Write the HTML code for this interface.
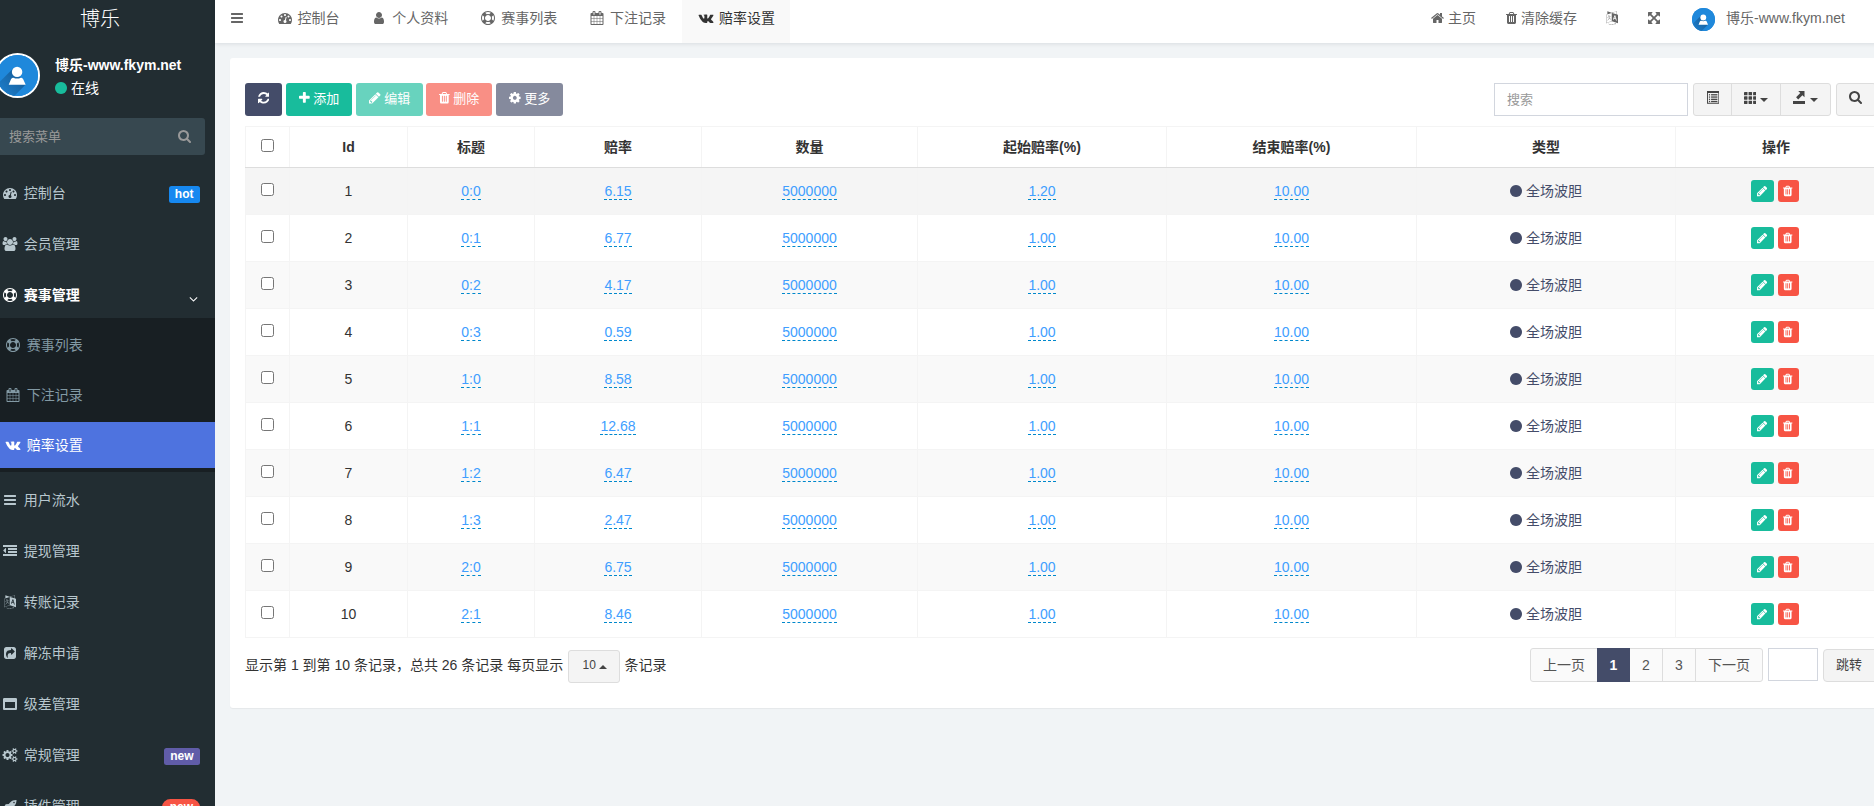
<!DOCTYPE html>
<html lang="zh-CN"><head><meta charset="utf-8"><title>博乐</title>
<style>
*{box-sizing:border-box}
html,body{margin:0;padding:0}
body{width:1874px;height:806px;overflow:hidden;position:relative;background:#f1f4f6;font-family:"Liberation Sans","Noto Sans CJK SC",sans-serif;font-size:14px;line-height:20px;color:#333}
a{text-decoration:none;color:inherit}
ul{list-style:none;margin:0;padding:0}
/* sidebar */
#side{position:absolute;left:-15px;top:-7px;width:230px;height:900px;background:#222d32;color:#b8c7ce}
#logo{height:50px;line-height:52px;text-align:center;font-size:20px;font-weight:300;color:#fff}
#upanel{position:relative;height:65px}
#upanel .av{position:absolute;left:10px;top:10px;width:45px;height:45px;border-radius:50%;background:#1f88db;border:2px solid #fff;overflow:hidden}
#upanel .nm{position:absolute;left:70px;top:12px;font-weight:bold;color:#fff;font-size:14px;white-space:nowrap}
#upanel .ol{position:absolute;left:70px;top:35px;color:#fff;font-size:14px;white-space:nowrap}
#sform{margin:10px 10px 0;height:37px;background:#374850;border-radius:3px;position:relative;font-size:13px;color:#999;line-height:37px;padding-left:14px}
#sform svg{position:absolute;right:14px;top:10.5px}
#menu{padding-top:10px}
#menu>li{margin-top:5px}
#menu li>a{display:block;height:46px;line-height:46px;padding-left:16.2px;position:relative;white-space:nowrap}
#menu li>a .t{margin-left:.8px}
#menu .sub{background:#181f23;padding:0 0 4px;color:#8299a4}
#menu .sub li{padding-top:4px}
#menu .sub li>a{padding-left:19.2px}
#menu .sub li>a .t{margin-left:.6px}
#menu .sub li.act>a{background:#4e73df;color:#fff}
#menu .open>a{color:#fff;font-weight:bold}
.bdg{position:absolute;right:15px;top:16px;height:17px;line-height:17px;font-size:12px;font-weight:bold;color:#fff;border-radius:2.5px;padding:0 6.5px 0 5.5px}
/* header */
#hdr{position:absolute;left:215px;top:-7px;width:1700px;height:50px;background:#fff;box-shadow:0 1px 4px rgba(0,21,41,.10);color:#666}
#hdr .tg{position:absolute;left:0;top:0;width:44px;height:50px;line-height:50px;text-align:center}
#tabs{position:absolute;left:45px;top:0;height:50px;white-space:nowrap;font-size:0}
#tabs a{display:inline-block;height:50px;line-height:50px;padding:0 15.5px;font-size:14px;vertical-align:top}
#tabs a.act{background:#f9f9f9;color:#333}
#rnav{position:absolute;left:0;top:0;height:50px;line-height:50px}
#rnav>*{position:absolute;top:0;white-space:nowrap}
/* panel */
#panel{position:absolute;left:230px;top:58px;width:1700px;height:650px;background:#fff;border-radius:3px;box-shadow:0 1px 1px rgba(0,0,0,.05)}
.btn{position:absolute;top:25px;height:33px;line-height:31px;border-radius:3px;color:#fff;text-align:center;font-size:13px;white-space:nowrap}
.gbtn{position:absolute;background:#f4f4f4;border:1px solid #ddd;color:#444;text-align:center}
/* table */
#tbl{position:absolute;left:15px;top:68px;border-collapse:collapse;table-layout:fixed;width:1631px}
#tbl th,#tbl td{border:1px solid #f4f4f4;text-align:center;padding:0;vertical-align:middle}
#tbl th{height:41px;font-weight:bold;border-bottom:1px solid #ddd;color:#333}
#tbl td{height:47px}
#tbl tbody tr:nth-child(odd){background:#f9f9f9}
#tbl tbody tr.hov{background:#f5f5f5}
.cb{display:inline-block;width:13px;height:13px;border:1px solid #767676;border-radius:2.5px;background:#fff;vertical-align:middle;position:relative;top:-3px}
a.ed{color:#409eff;border-bottom:1px dashed #08c}
.ty{color:#444c69}
.bx{position:relative;left:-1px;display:inline-block;height:22px;line-height:20px;padding:0;text-align:center;border-radius:3px;border:1px solid transparent;font-size:12px;vertical-align:middle}
.bx-e{background:#18bc9c;width:23px;margin-right:4px;margin-left:-1px}
.bx-d{background:#f75444;width:21px}
/* footer pagination */
#pinfo{position:absolute;left:15px;top:597px;white-space:nowrap;color:#333}
#pinfo2{position:absolute;left:394.5px;top:597px;white-space:nowrap;color:#333}
.pg{position:absolute;top:590px;height:34px;line-height:32px;border:1px solid #ddd;background:#fafafa;color:#555;text-align:center}

</style></head>
<body>
<div id="side">
 <div id="logo">博乐</div>
 <div id="upanel">
  <div class="av"><svg width="41" height="41" viewBox="0 0 41 41"><defs><linearGradient id="sh1" x1="1" y1="0" x2="0" y2="1"><stop offset="0.25" stop-color="#14568f" stop-opacity=".7"/><stop offset="0.8" stop-color="#14568f" stop-opacity="0"/></linearGradient></defs><rect width="41" height="41" fill="#1f88db"/><polygon points="16.4,13.2 28.7,29.6 3.7,54.6 -8.6,38.2" fill="url(#sh1)"/><circle cx="20.1" cy="16.9" r="5.2" fill="#fff"/><path d="M11.7 29.8 L14 24.2 Q14.8 22.3 16.4 22.7 Q20.1 24.4 23.8 22.7 Q25.4 22.3 26.2 24.2 L28.7 29.8 Z" fill="#fff"/></svg></div>
  <div class="nm">博乐-www.fkym.net</div>
  <div class="ol"><svg style="display:inline-block;width:12.00px;height:14.0px;vertical-align:-2.00px;" viewBox="-0 0 1536 1792" fill="#18bc9c"><path transform="translate(0,1536) scale(1,-1)" d="M1536 640q0 -209 -103 -385.5t-279.5 -279.5t-385.5 -103t-385.5 103t-279.5 279.5t-103 385.5t103 385.5t279.5 279.5t385.5 103t385.5 -103t279.5 -279.5t103 -385.5z"/></svg> 在线</div>
 </div>
 <div id="sform">搜索菜单<svg style="display:inline-block;width:13.00px;height:14.0px;vertical-align:-2.00px;" viewBox="-0 0 1664 1792" fill="#999"><path transform="translate(0,1536) scale(1,-1)" d="M1152 704q0 185 -131.5 316.5t-316.5 131.5t-316.5 -131.5t-131.5 -316.5t131.5 -316.5t316.5 -131.5t316.5 131.5t131.5 316.5zM1664 -128q0 -52 -38 -90t-90 -38q-54 0 -90 38l-343 342q-179 -124 -399 -124q-143 0 -273.5 55.5t-225 150t-150 225t-55.5 273.5 t55.5 273.5t150 225t225 150t273.5 55.5t273.5 -55.5t225 -150t150 -225t55.5 -273.5q0 -220 -124 -399l343 -343q37 -37 37 -90z"/></svg></div>
 <ul id="menu">
  <li><a><svg style="display:inline-block;width:18.00px;height:14px;vertical-align:-2.00px;" viewBox="-256 0 2304 1792" fill="currentColor"><path transform="translate(0,1536) scale(1,-1)" d="M384 384q0 53 -37.5 90.5t-90.5 37.5t-90.5 -37.5t-37.5 -90.5t37.5 -90.5t90.5 -37.5t90.5 37.5t37.5 90.5zM576 832q0 53 -37.5 90.5t-90.5 37.5t-90.5 -37.5t-37.5 -90.5t37.5 -90.5t90.5 -37.5t90.5 37.5t37.5 90.5zM1004 351l101 382q6 26 -7.5 48.5t-38.5 29.5 t-48 -6.5t-30 -39.5l-101 -382q-60 -5 -107 -43.5t-63 -98.5q-20 -77 20 -146t117 -89t146 20t89 117q16 60 -6 117t-72 91zM1664 384q0 53 -37.5 90.5t-90.5 37.5t-90.5 -37.5t-37.5 -90.5t37.5 -90.5t90.5 -37.5t90.5 37.5t37.5 90.5zM1024 1024q0 53 -37.5 90.5 t-90.5 37.5t-90.5 -37.5t-37.5 -90.5t37.5 -90.5t90.5 -37.5t90.5 37.5t37.5 90.5zM1472 832q0 53 -37.5 90.5t-90.5 37.5t-90.5 -37.5t-37.5 -90.5t37.5 -90.5t90.5 -37.5t90.5 37.5t37.5 90.5zM1792 384q0 -261 -141 -483q-19 -29 -54 -29h-1402q-35 0 -54 29 q-141 221 -141 483q0 182 71 348t191 286t286 191t348 71t348 -71t286 -191t191 -286t71 -348z"/></svg><span class="t"> 控制台</span><span class="bdg" style="background:#1688f0">hot</span></a></li>
  <li><a><svg style="display:inline-block;width:18.00px;height:14px;vertical-align:-2.00px;" viewBox="-192 0 2304 1792" fill="currentColor"><path transform="translate(0,1536) scale(1,-1)" d="M593 640q-162 -5 -265 -128h-134q-82 0 -138 40.5t-56 118.5q0 353 124 353q6 0 43.5 -21t97.5 -42.5t119 -21.5q67 0 133 23q-5 -37 -5 -66q0 -139 81 -256zM1664 3q0 -120 -73 -189.5t-194 -69.5h-874q-121 0 -194 69.5t-73 189.5q0 53 3.5 103.5t14 109t26.5 108.5 t43 97.5t62 81t85.5 53.5t111.5 20q10 0 43 -21.5t73 -48t107 -48t135 -21.5t135 21.5t107 48t73 48t43 21.5q61 0 111.5 -20t85.5 -53.5t62 -81t43 -97.5t26.5 -108.5t14 -109t3.5 -103.5zM640 1280q0 -106 -75 -181t-181 -75t-181 75t-75 181t75 181t181 75t181 -75 t75 -181zM1344 896q0 -159 -112.5 -271.5t-271.5 -112.5t-271.5 112.5t-112.5 271.5t112.5 271.5t271.5 112.5t271.5 -112.5t112.5 -271.5zM1920 671q0 -78 -56 -118.5t-138 -40.5h-134q-103 123 -265 128q81 117 81 256q0 29 -5 66q66 -23 133 -23q59 0 119 21.5t97.5 42.5 t43.5 21q124 0 124 -353zM1792 1280q0 -106 -75 -181t-181 -75t-181 75t-75 181t75 181t181 75t181 -75t75 -181z"/></svg><span class="t"> 会员管理</span></a></li>
  <li class="open"><a><svg style="display:inline-block;width:18.00px;height:14px;vertical-align:-2.00px;" viewBox="-256 0 2304 1792" fill="currentColor"><path transform="translate(0,1536) scale(1,-1)" d="M896 1536q182 0 348 -71t286 -191t191 -286t71 -348t-71 -348t-191 -286t-286 -191t-348 -71t-348 71t-286 191t-191 286t-71 348t71 348t191 286t286 191t348 71zM896 1408q-190 0 -361 -90l194 -194q82 28 167 28t167 -28l194 194q-171 90 -361 90zM218 279l194 194 q-28 82 -28 167t28 167l-194 194q-90 -171 -90 -361t90 -361zM896 -128q190 0 361 90l-194 194q-82 -28 -167 -28t-167 28l-194 -194q171 -90 361 -90zM896 256q159 0 271.5 112.5t112.5 271.5t-112.5 271.5t-271.5 112.5t-271.5 -112.5t-112.5 -271.5t112.5 -271.5 t271.5 -112.5zM1380 473l194 -194q90 171 90 361t-90 361l-194 -194q28 -82 28 -167t-28 -167z"/></svg><span class="t"> 赛事管理</span><span style="position:absolute;right:17px;top:3.5px;color:#fff"><svg style="display:inline-block;width:9.00px;height:14.0px;vertical-align:-2.00px;" viewBox="-0 0 1152 1792" fill="currentColor"><path transform="translate(0,1536) scale(1,-1)" d="M1075 800q0 -13 -10 -23l-466 -466q-10 -10 -23 -10t-23 10l-466 466q-10 10 -10 23t10 23l50 50q10 10 23 10t23 -10l393 -393l393 393q10 10 23 10t23 -10l50 -50q10 -10 10 -23z"/></svg></span></a>
   <ul class="sub">
    <li><a><svg style="display:inline-block;width:18.00px;height:14px;vertical-align:-2.00px;" viewBox="-256 0 2304 1792" fill="currentColor"><path transform="translate(0,1536) scale(1,-1)" d="M896 1536q182 0 348 -71t286 -191t191 -286t71 -348t-71 -348t-191 -286t-286 -191t-348 -71t-348 71t-286 191t-191 286t-71 348t71 348t191 286t286 191t348 71zM896 1408q-190 0 -361 -90l194 -194q82 28 167 28t167 -28l194 194q-171 90 -361 90zM218 279l194 194 q-28 82 -28 167t28 167l-194 194q-90 -171 -90 -361t90 -361zM896 -128q190 0 361 90l-194 194q-82 -28 -167 -28t-167 28l-194 -194q171 -90 361 -90zM896 256q159 0 271.5 112.5t112.5 271.5t-112.5 271.5t-271.5 112.5t-271.5 -112.5t-112.5 -271.5t112.5 -271.5 t271.5 -112.5zM1380 473l194 -194q90 171 90 361t-90 361l-194 -194q28 -82 28 -167t-28 -167z"/></svg><span class="t"> 赛事列表</span></a></li>
    <li><a><svg style="display:inline-block;width:18.00px;height:14px;vertical-align:-2.00px;" viewBox="-320 0 2304 1792" fill="currentColor"><path transform="translate(0,1536) scale(1,-1)" d="M128 -128h288v288h-288v-288zM480 -128h320v288h-320v-288zM128 224h288v320h-288v-320zM480 224h320v320h-320v-320zM128 608h288v288h-288v-288zM864 -128h320v288h-320v-288zM480 608h320v288h-320v-288zM1248 -128h288v288h-288v-288zM864 224h320v320h-320v-320z M512 1088v288q0 13 -9.5 22.5t-22.5 9.5h-64q-13 0 -22.5 -9.5t-9.5 -22.5v-288q0 -13 9.5 -22.5t22.5 -9.5h64q13 0 22.5 9.5t9.5 22.5zM1248 224h288v320h-288v-320zM864 608h320v288h-320v-288zM1248 608h288v288h-288v-288zM1280 1088v288q0 13 -9.5 22.5t-22.5 9.5h-64 q-13 0 -22.5 -9.5t-9.5 -22.5v-288q0 -13 9.5 -22.5t22.5 -9.5h64q13 0 22.5 9.5t9.5 22.5zM1664 1152v-1280q0 -52 -38 -90t-90 -38h-1408q-52 0 -90 38t-38 90v1280q0 52 38 90t90 38h128v96q0 66 47 113t113 47h64q66 0 113 -47t47 -113v-96h384v96q0 66 47 113t113 47 h64q66 0 113 -47t47 -113v-96h128q52 0 90 -38t38 -90z"/></svg><span class="t"> 下注记录</span></a></li>
    <li class="act"><a><svg style="display:inline-block;width:18.00px;height:14px;vertical-align:-2.00px;" viewBox="-192 0 2304 1792" fill="currentColor"><path transform="translate(0,1536) scale(1,-1)" d="M1917 1016q23 -64 -150 -294q-24 -32 -65 -85q-40 -51 -55 -72t-30.5 -49.5t-12 -42t13 -34.5t32.5 -43t57 -53q4 -2 5 -4q141 -131 191 -221q3 -5 6.5 -12.5t7 -26.5t-0.5 -34t-25 -27.5t-59 -12.5l-256 -4q-24 -5 -56 5t-52 22l-20 12q-30 21 -70 64t-68.5 77.5t-61 58 t-56.5 15.5q-3 -1 -8 -3.5t-17 -14.5t-21.5 -29.5t-17 -52t-6.5 -77.5q0 -15 -3.5 -27.5t-7.5 -18.5l-4 -5q-18 -19 -53 -22h-115q-71 -4 -146 16.5t-131.5 53t-103 66t-70.5 57.5l-25 24q-10 10 -27.5 30t-71.5 91t-106 151t-122.5 211t-130.5 272q-6 16 -6 27t3 16l4 6 q15 19 57 19l274 2q12 -2 23 -6.5t16 -8.5l5 -3q16 -11 24 -32q20 -50 46 -103.5t41 -81.5l16 -29q29 -60 56 -104t48.5 -68.5t41.5 -38.5t34 -14t27 5q2 1 5 5t12 22t13.5 47t9.5 81t0 125q-2 40 -9 73t-14 46l-6 12q-25 34 -85 43q-13 2 5 24q16 19 38 30q53 26 239 24 q82 -1 135 -13q20 -5 33.5 -13.5t20.5 -24t10.5 -32t3.5 -45.5t-1 -55t-2.5 -70.5t-1.5 -82.5q0 -11 -1 -42t-0.5 -48t3.5 -40.5t11.5 -39t22.5 -24.5q8 -2 17 -4t26 11t38 34.5t52 67t68 107.5q60 104 107 225q4 10 10 17.5t11 10.5l4 3l5 2.5t13 3t20 0.5l288 2 q39 5 64 -2.5t31 -16.5z"/></svg><span class="t"> 赔率设置</span></a></li>
   </ul>
  </li>
  <li><a><svg style="display:inline-block;width:18.00px;height:14px;vertical-align:-2.00px;" viewBox="-384 0 2304 1792" fill="currentColor"><path transform="translate(0,1536) scale(1,-1)" d="M1536 192v-128q0 -26 -19 -45t-45 -19h-1408q-26 0 -45 19t-19 45v128q0 26 19 45t45 19h1408q26 0 45 -19t19 -45zM1536 704v-128q0 -26 -19 -45t-45 -19h-1408q-26 0 -45 19t-19 45v128q0 26 19 45t45 19h1408q26 0 45 -19t19 -45zM1536 1216v-128q0 -26 -19 -45 t-45 -19h-1408q-26 0 -45 19t-19 45v128q0 26 19 45t45 19h1408q26 0 45 -19t19 -45z"/></svg><span class="t"> 用户流水</span></a></li>
  <li><a><svg style="display:inline-block;width:18.00px;height:14px;vertical-align:-2.00px;" viewBox="-256 0 2304 1792" fill="currentColor"><path transform="translate(0,1536) scale(1,-1)" d="M384 992v-576q0 -13 -9.5 -22.5t-22.5 -9.5q-14 0 -23 9l-288 288q-9 9 -9 23t9 23l288 288q9 9 23 9q13 0 22.5 -9.5t9.5 -22.5zM1792 224v-192q0 -13 -9.5 -22.5t-22.5 -9.5h-1728q-13 0 -22.5 9.5t-9.5 22.5v192q0 13 9.5 22.5t22.5 9.5h1728q13 0 22.5 -9.5 t9.5 -22.5zM1792 608v-192q0 -13 -9.5 -22.5t-22.5 -9.5h-1088q-13 0 -22.5 9.5t-9.5 22.5v192q0 13 9.5 22.5t22.5 9.5h1088q13 0 22.5 -9.5t9.5 -22.5zM1792 992v-192q0 -13 -9.5 -22.5t-22.5 -9.5h-1088q-13 0 -22.5 9.5t-9.5 22.5v192q0 13 9.5 22.5t22.5 9.5h1088 q13 0 22.5 -9.5t9.5 -22.5zM1792 1376v-192q0 -13 -9.5 -22.5t-22.5 -9.5h-1728q-13 0 -22.5 9.5t-9.5 22.5v192q0 13 9.5 22.5t22.5 9.5h1728q13 0 22.5 -9.5t9.5 -22.5z"/></svg><span class="t"> 提现管理</span></a></li>
  <li><a><svg style="display:inline-block;width:18.00px;height:14px;vertical-align:-2.00px;" viewBox="-384 0 2304 1792" fill="currentColor"><path transform="translate(0,1536) scale(1,-1)" d="M654 458q-1 -3 -12.5 0.5t-31.5 11.5l-20 9q-44 20 -87 49q-7 5 -41 31.5t-38 28.5q-67 -103 -134 -181q-81 -95 -105 -110q-4 -2 -19.5 -4t-18.5 0q6 4 82 92q21 24 85.5 115t78.5 118q17 30 51 98.5t36 77.5q-8 1 -110 -33q-8 -2 -27.5 -7.5t-34.5 -9.5t-17 -5 q-2 -2 -2 -10.5t-1 -9.5q-5 -10 -31 -15q-23 -7 -47 0q-18 4 -28 21q-4 6 -5 23q6 2 24.5 5t29.5 6q58 16 105 32q100 35 102 35q10 2 43 19.5t44 21.5q9 3 21.5 8t14.5 5.5t6 -0.5q2 -12 -1 -33q0 -2 -12.5 -27t-26.5 -53.5t-17 -33.5q-25 -50 -77 -131l64 -28 q12 -6 74.5 -32t67.5 -28q4 -1 10.5 -25.5t4.5 -30.5zM449 944q3 -15 -4 -28q-12 -23 -50 -38q-30 -12 -60 -12q-26 3 -49 26q-14 15 -18 41l1 3q3 -3 19.5 -5t26.5 0t58 16q36 12 55 14q17 0 21 -17zM1147 815l63 -227l-139 42zM39 15l694 232v1032l-694 -233v-1031z M1280 332l102 -31l-181 657l-100 31l-216 -536l102 -31l45 110l211 -65zM777 1294l573 -184v380zM1088 -29l158 -13l-54 -160l-40 66q-130 -83 -276 -108q-58 -12 -91 -12h-84q-79 0 -199.5 39t-183.5 85q-8 7 -8 16q0 8 5 13.5t13 5.5q4 0 18 -7.5t30.5 -16.5t20.5 -11 q73 -37 159.5 -61.5t157.5 -24.5q95 0 167 14.5t157 50.5q15 7 30.5 15.5t34 19t28.5 16.5zM1536 1050v-1079l-774 246q-14 -6 -375 -127.5t-368 -121.5q-13 0 -18 13q0 1 -1 3v1078q3 9 4 10q5 6 20 11q107 36 149 50v384l558 -198q2 0 160.5 55t316 108.5t161.5 53.5 q20 0 20 -21v-418z"/></svg><span class="t"> 转账记录</span></a></li>
  <li><a><svg style="display:inline-block;width:18.00px;height:14px;vertical-align:-2.00px;" viewBox="-384 0 2304 1792" fill="currentColor"><path transform="translate(0,1536) scale(1,-1)" d="M1005 435l352 352q19 19 19 45t-19 45l-352 352q-30 31 -69 14q-40 -17 -40 -59v-160q-119 0 -216 -19.5t-162.5 -51t-114 -79t-76.5 -95.5t-44.5 -109t-21.5 -111.5t-5 -110.5q0 -181 167 -404q11 -12 25 -12q7 0 13 3q22 9 19 33q-44 354 62 473q46 52 130 75.5 t224 23.5v-160q0 -42 40 -59q12 -5 24 -5q26 0 45 19zM1536 1120v-960q0 -119 -84.5 -203.5t-203.5 -84.5h-960q-119 0 -203.5 84.5t-84.5 203.5v960q0 119 84.5 203.5t203.5 84.5h960q119 0 203.5 -84.5t84.5 -203.5z"/></svg><span class="t"> 解冻申请</span></a></li>
  <li><a><svg style="display:inline-block;width:18.00px;height:14px;vertical-align:-2.00px;" viewBox="-256 0 2304 1792" fill="currentColor"><path transform="translate(0,1536) scale(1,-1)" d="M256 128h1280v768h-1280v-768zM1792 1248v-1216q0 -66 -47 -113t-113 -47h-1472q-66 0 -113 47t-47 113v1216q0 66 47 113t113 47h1472q66 0 113 -47t47 -113z"/></svg><span class="t"> 级差管理</span></a></li>
  <li><a><svg style="display:inline-block;width:18.00px;height:14px;vertical-align:-2.00px;" viewBox="-192 0 2304 1792" fill="currentColor"><path transform="translate(0,1536) scale(1,-1)" d="M896 640q0 106 -75 181t-181 75t-181 -75t-75 -181t75 -181t181 -75t181 75t75 181zM1664 128q0 52 -38 90t-90 38t-90 -38t-38 -90q0 -53 37.5 -90.5t90.5 -37.5t90.5 37.5t37.5 90.5zM1664 1152q0 52 -38 90t-90 38t-90 -38t-38 -90q0 -53 37.5 -90.5t90.5 -37.5 t90.5 37.5t37.5 90.5zM1280 731v-185q0 -10 -7 -19.5t-16 -10.5l-155 -24q-11 -35 -32 -76q34 -48 90 -115q7 -11 7 -20q0 -12 -7 -19q-23 -30 -82.5 -89.5t-78.5 -59.5q-11 0 -21 7l-115 90q-37 -19 -77 -31q-11 -108 -23 -155q-7 -24 -30 -24h-186q-11 0 -20 7.5t-10 17.5 l-23 153q-34 10 -75 31l-118 -89q-7 -7 -20 -7q-11 0 -21 8q-144 133 -144 160q0 9 7 19q10 14 41 53t47 61q-23 44 -35 82l-152 24q-10 1 -17 9.5t-7 19.5v185q0 10 7 19.5t16 10.5l155 24q11 35 32 76q-34 48 -90 115q-7 11 -7 20q0 12 7 20q22 30 82 89t79 59q11 0 21 -7 l115 -90q34 18 77 32q11 108 23 154q7 24 30 24h186q11 0 20 -7.5t10 -17.5l23 -153q34 -10 75 -31l118 89q8 7 20 7q11 0 21 -8q144 -133 144 -160q0 -8 -7 -19q-12 -16 -42 -54t-45 -60q23 -48 34 -82l152 -23q10 -2 17 -10.5t7 -19.5zM1920 198v-140q0 -16 -149 -31 q-12 -27 -30 -52q51 -113 51 -138q0 -4 -4 -7q-122 -71 -124 -71q-8 0 -46 47t-52 68q-20 -2 -30 -2t-30 2q-14 -21 -52 -68t-46 -47q-2 0 -124 71q-4 3 -4 7q0 25 51 138q-18 25 -30 52q-149 15 -149 31v140q0 16 149 31q13 29 30 52q-51 113 -51 138q0 4 4 7q4 2 35 20 t59 34t30 16q8 0 46 -46.5t52 -67.5q20 2 30 2t30 -2q51 71 92 112l6 2q4 0 124 -70q4 -3 4 -7q0 -25 -51 -138q17 -23 30 -52q149 -15 149 -31zM1920 1222v-140q0 -16 -149 -31q-12 -27 -30 -52q51 -113 51 -138q0 -4 -4 -7q-122 -71 -124 -71q-8 0 -46 47t-52 68 q-20 -2 -30 -2t-30 2q-14 -21 -52 -68t-46 -47q-2 0 -124 71q-4 3 -4 7q0 25 51 138q-18 25 -30 52q-149 15 -149 31v140q0 16 149 31q13 29 30 52q-51 113 -51 138q0 4 4 7q4 2 35 20t59 34t30 16q8 0 46 -46.5t52 -67.5q20 2 30 2t30 -2q51 71 92 112l6 2q4 0 124 -70 q4 -3 4 -7q0 -25 -51 -138q17 -23 30 -52q149 -15 149 -31z"/></svg><span class="t"> 常规管理</span><span class="bdg" style="background:#605ca8;padding:0 6.5px">new</span></a></li>
  <li><a><svg style="display:inline-block;width:18.00px;height:14px;vertical-align:-2.00px;" viewBox="-320 0 2304 1792" fill="currentColor"><path transform="translate(0,1536) scale(1,-1)" d="M1440 1088q0 40 -28 68t-68 28t-68 -28t-28 -68t28 -68t68 -28t68 28t28 68zM1664 1376q0 -249 -75.5 -430.5t-253.5 -360.5q-81 -80 -195 -176l-20 -379q-2 -16 -16 -26l-384 -224q-7 -4 -16 -4q-12 0 -23 9l-64 64q-13 14 -8 32l85 276l-281 281l-276 -85q-3 -1 -9 -1 q-14 0 -23 9l-64 64q-17 19 -5 39l224 384q10 14 26 16l379 20q96 114 176 195q188 187 358 258t431 71q14 0 24 -9.5t10 -22.5z"/></svg><span class="t"> 插件管理</span><span class="bdg" style="background:#f75444;border-radius:9px;padding:0 7px 0 7.5px">new</span></a></li>
 </ul>
</div>
<div id="hdr">
 <a class="tg"><svg style="display:inline-block;width:12.00px;height:14.0px;vertical-align:-2.00px;" viewBox="-0 0 1536 1792" fill="currentColor"><path transform="translate(0,1536) scale(1,-1)" d="M1536 192v-128q0 -26 -19 -45t-45 -19h-1408q-26 0 -45 19t-19 45v128q0 26 19 45t45 19h1408q26 0 45 -19t19 -45zM1536 704v-128q0 -26 -19 -45t-45 -19h-1408q-26 0 -45 19t-19 45v128q0 26 19 45t45 19h1408q26 0 45 -19t19 -45zM1536 1216v-128q0 -26 -19 -45 t-45 -19h-1408q-26 0 -45 19t-19 45v128q0 26 19 45t45 19h1408q26 0 45 -19t19 -45z"/></svg></a>
 <div id="tabs">
  <a><svg style="display:inline-block;width:18.00px;height:14px;vertical-align:-2.00px;" viewBox="-256 0 2304 1792" fill="currentColor"><path transform="translate(0,1536) scale(1,-1)" d="M384 384q0 53 -37.5 90.5t-90.5 37.5t-90.5 -37.5t-37.5 -90.5t37.5 -90.5t90.5 -37.5t90.5 37.5t37.5 90.5zM576 832q0 53 -37.5 90.5t-90.5 37.5t-90.5 -37.5t-37.5 -90.5t37.5 -90.5t90.5 -37.5t90.5 37.5t37.5 90.5zM1004 351l101 382q6 26 -7.5 48.5t-38.5 29.5 t-48 -6.5t-30 -39.5l-101 -382q-60 -5 -107 -43.5t-63 -98.5q-20 -77 20 -146t117 -89t146 20t89 117q16 60 -6 117t-72 91zM1664 384q0 53 -37.5 90.5t-90.5 37.5t-90.5 -37.5t-37.5 -90.5t37.5 -90.5t90.5 -37.5t90.5 37.5t37.5 90.5zM1024 1024q0 53 -37.5 90.5 t-90.5 37.5t-90.5 -37.5t-37.5 -90.5t37.5 -90.5t90.5 -37.5t90.5 37.5t37.5 90.5zM1472 832q0 53 -37.5 90.5t-90.5 37.5t-90.5 -37.5t-37.5 -90.5t37.5 -90.5t90.5 -37.5t90.5 37.5t37.5 90.5zM1792 384q0 -261 -141 -483q-19 -29 -54 -29h-1402q-35 0 -54 29 q-141 221 -141 483q0 182 71 348t191 286t286 191t348 71t348 -71t286 -191t191 -286t71 -348z"/></svg> 控制台</a><a><svg style="display:inline-block;width:18.00px;height:14px;vertical-align:-2.00px;" viewBox="-512 0 2304 1792" fill="currentColor"><path transform="translate(0,1536) scale(1,-1)" d="M1280 137q0 -109 -62.5 -187t-150.5 -78h-854q-88 0 -150.5 78t-62.5 187q0 85 8.5 160.5t31.5 152t58.5 131t94 89t134.5 34.5q131 -128 313 -128t313 128q76 0 134.5 -34.5t94 -89t58.5 -131t31.5 -152t8.5 -160.5zM1024 1024q0 -159 -112.5 -271.5t-271.5 -112.5 t-271.5 112.5t-112.5 271.5t112.5 271.5t271.5 112.5t271.5 -112.5t112.5 -271.5z"/></svg> 个人资料</a><a><svg style="display:inline-block;width:18.00px;height:14px;vertical-align:-2.00px;" viewBox="-256 0 2304 1792" fill="currentColor"><path transform="translate(0,1536) scale(1,-1)" d="M896 1536q182 0 348 -71t286 -191t191 -286t71 -348t-71 -348t-191 -286t-286 -191t-348 -71t-348 71t-286 191t-191 286t-71 348t71 348t191 286t286 191t348 71zM896 1408q-190 0 -361 -90l194 -194q82 28 167 28t167 -28l194 194q-171 90 -361 90zM218 279l194 194 q-28 82 -28 167t28 167l-194 194q-90 -171 -90 -361t90 -361zM896 -128q190 0 361 90l-194 194q-82 -28 -167 -28t-167 28l-194 -194q171 -90 361 -90zM896 256q159 0 271.5 112.5t112.5 271.5t-112.5 271.5t-271.5 112.5t-271.5 -112.5t-112.5 -271.5t112.5 -271.5 t271.5 -112.5zM1380 473l194 -194q90 171 90 361t-90 361l-194 -194q28 -82 28 -167t-28 -167z"/></svg> 赛事列表</a><a><svg style="display:inline-block;width:18.00px;height:14px;vertical-align:-2.00px;" viewBox="-320 0 2304 1792" fill="currentColor"><path transform="translate(0,1536) scale(1,-1)" d="M128 -128h288v288h-288v-288zM480 -128h320v288h-320v-288zM128 224h288v320h-288v-320zM480 224h320v320h-320v-320zM128 608h288v288h-288v-288zM864 -128h320v288h-320v-288zM480 608h320v288h-320v-288zM1248 -128h288v288h-288v-288zM864 224h320v320h-320v-320z M512 1088v288q0 13 -9.5 22.5t-22.5 9.5h-64q-13 0 -22.5 -9.5t-9.5 -22.5v-288q0 -13 9.5 -22.5t22.5 -9.5h64q13 0 22.5 9.5t9.5 22.5zM1248 224h288v320h-288v-320zM864 608h320v288h-320v-288zM1248 608h288v288h-288v-288zM1280 1088v288q0 13 -9.5 22.5t-22.5 9.5h-64 q-13 0 -22.5 -9.5t-9.5 -22.5v-288q0 -13 9.5 -22.5t22.5 -9.5h64q13 0 22.5 9.5t9.5 22.5zM1664 1152v-1280q0 -52 -38 -90t-90 -38h-1408q-52 0 -90 38t-38 90v1280q0 52 38 90t90 38h128v96q0 66 47 113t113 47h64q66 0 113 -47t47 -113v-96h384v96q0 66 47 113t113 47 h64q66 0 113 -47t47 -113v-96h128q52 0 90 -38t38 -90z"/></svg> 下注记录</a><a class="act"><svg style="display:inline-block;width:18.00px;height:14px;vertical-align:-2.00px;" viewBox="-192 0 2304 1792" fill="currentColor"><path transform="translate(0,1536) scale(1,-1)" d="M1917 1016q23 -64 -150 -294q-24 -32 -65 -85q-40 -51 -55 -72t-30.5 -49.5t-12 -42t13 -34.5t32.5 -43t57 -53q4 -2 5 -4q141 -131 191 -221q3 -5 6.5 -12.5t7 -26.5t-0.5 -34t-25 -27.5t-59 -12.5l-256 -4q-24 -5 -56 5t-52 22l-20 12q-30 21 -70 64t-68.5 77.5t-61 58 t-56.5 15.5q-3 -1 -8 -3.5t-17 -14.5t-21.5 -29.5t-17 -52t-6.5 -77.5q0 -15 -3.5 -27.5t-7.5 -18.5l-4 -5q-18 -19 -53 -22h-115q-71 -4 -146 16.5t-131.5 53t-103 66t-70.5 57.5l-25 24q-10 10 -27.5 30t-71.5 91t-106 151t-122.5 211t-130.5 272q-6 16 -6 27t3 16l4 6 q15 19 57 19l274 2q12 -2 23 -6.5t16 -8.5l5 -3q16 -11 24 -32q20 -50 46 -103.5t41 -81.5l16 -29q29 -60 56 -104t48.5 -68.5t41.5 -38.5t34 -14t27 5q2 1 5 5t12 22t13.5 47t9.5 81t0 125q-2 40 -9 73t-14 46l-6 12q-25 34 -85 43q-13 2 5 24q16 19 38 30q53 26 239 24 q82 -1 135 -13q20 -5 33.5 -13.5t20.5 -24t10.5 -32t3.5 -45.5t-1 -55t-2.5 -70.5t-1.5 -82.5q0 -11 -1 -42t-0.5 -48t3.5 -40.5t11.5 -39t22.5 -24.5q8 -2 17 -4t26 11t38 34.5t52 67t68 107.5q60 104 107 225q4 10 10 17.5t11 10.5l4 3l5 2.5t13 3t20 0.5l288 2 q39 5 64 -2.5t31 -16.5z"/></svg> 赔率设置</a>
 </div>
 <div id="rnav">
  <span style="left:1216px"><svg style="display:inline-block;width:13.00px;height:14.0px;vertical-align:-2.00px;" viewBox="-0 0 1664 1792" fill="currentColor"><path transform="translate(0,1536) scale(1,-1)" d="M1408 544v-480q0 -26 -19 -45t-45 -19h-384v384h-256v-384h-384q-26 0 -45 19t-19 45v480q0 1 0.5 3t0.5 3l575 474l575 -474q1 -2 1 -6zM1631 613l-62 -74q-8 -9 -21 -11h-3q-13 0 -21 7l-692 577l-692 -577q-12 -8 -24 -7q-13 2 -21 11l-62 74q-8 10 -7 23.5t11 21.5 l719 599q32 26 76 26t76 -26l244 -204v195q0 14 9 23t23 9h192q14 0 23 -9t9 -23v-408l219 -182q10 -8 11 -21.5t-7 -23.5z"/></svg> 主页</span>
  <span style="left:1291px"><svg style="display:inline-block;width:11.00px;height:14.0px;vertical-align:-2.00px;" viewBox="-0 0 1408 1792" fill="currentColor"><path transform="translate(0,1536) scale(1,-1)" d="M512 160v704q0 14 -9 23t-23 9h-64q-14 0 -23 -9t-9 -23v-704q0 -14 9 -23t23 -9h64q14 0 23 9t9 23zM768 160v704q0 14 -9 23t-23 9h-64q-14 0 -23 -9t-9 -23v-704q0 -14 9 -23t23 -9h64q14 0 23 9t9 23zM1024 160v704q0 14 -9 23t-23 9h-64q-14 0 -23 -9t-9 -23v-704 q0 -14 9 -23t23 -9h64q14 0 23 9t9 23zM480 1152h448l-48 117q-7 9 -17 11h-317q-10 -2 -17 -11zM1408 1120v-64q0 -14 -9 -23t-23 -9h-96v-948q0 -83 -47 -143.5t-113 -60.5h-832q-66 0 -113 58.5t-47 141.5v952h-96q-14 0 -23 9t-9 23v64q0 14 9 23t23 9h309l70 167 q15 37 54 63t79 26h320q40 0 79 -26t54 -63l70 -167h309q14 0 23 -9t9 -23z"/></svg> 清除缓存</span>
  <span style="left:1391px"><svg style="display:inline-block;width:12.00px;height:14.0px;vertical-align:-2.00px;" viewBox="-0 0 1536 1792" fill="currentColor"><path transform="translate(0,1536) scale(1,-1)" d="M654 458q-1 -3 -12.5 0.5t-31.5 11.5l-20 9q-44 20 -87 49q-7 5 -41 31.5t-38 28.5q-67 -103 -134 -181q-81 -95 -105 -110q-4 -2 -19.5 -4t-18.5 0q6 4 82 92q21 24 85.5 115t78.5 118q17 30 51 98.5t36 77.5q-8 1 -110 -33q-8 -2 -27.5 -7.5t-34.5 -9.5t-17 -5 q-2 -2 -2 -10.5t-1 -9.5q-5 -10 -31 -15q-23 -7 -47 0q-18 4 -28 21q-4 6 -5 23q6 2 24.5 5t29.5 6q58 16 105 32q100 35 102 35q10 2 43 19.5t44 21.5q9 3 21.5 8t14.5 5.5t6 -0.5q2 -12 -1 -33q0 -2 -12.5 -27t-26.5 -53.5t-17 -33.5q-25 -50 -77 -131l64 -28 q12 -6 74.5 -32t67.5 -28q4 -1 10.5 -25.5t4.5 -30.5zM449 944q3 -15 -4 -28q-12 -23 -50 -38q-30 -12 -60 -12q-26 3 -49 26q-14 15 -18 41l1 3q3 -3 19.5 -5t26.5 0t58 16q36 12 55 14q17 0 21 -17zM1147 815l63 -227l-139 42zM39 15l694 232v1032l-694 -233v-1031z M1280 332l102 -31l-181 657l-100 31l-216 -536l102 -31l45 110l211 -65zM777 1294l573 -184v380zM1088 -29l158 -13l-54 -160l-40 66q-130 -83 -276 -108q-58 -12 -91 -12h-84q-79 0 -199.5 39t-183.5 85q-8 7 -8 16q0 8 5 13.5t13 5.5q4 0 18 -7.5t30.5 -16.5t20.5 -11 q73 -37 159.5 -61.5t157.5 -24.5q95 0 167 14.5t157 50.5q15 7 30.5 15.5t34 19t28.5 16.5zM1536 1050v-1079l-774 246q-14 -6 -375 -127.5t-368 -121.5q-13 0 -18 13q0 1 -1 3v1078q3 9 4 10q5 6 20 11q107 36 149 50v384l558 -198q2 0 160.5 55t316 108.5t161.5 53.5 q20 0 20 -21v-418z"/></svg></span>
  <span style="left:1433px"><svg style="display:inline-block;width:12.00px;height:14.0px;vertical-align:-2.00px;" viewBox="-0 0 1536 1792" fill="currentColor"><path transform="translate(0,1536) scale(1,-1)" d="M1283 995l-355 -355l355 -355l144 144q29 31 70 14q39 -17 39 -59v-448q0 -26 -19 -45t-45 -19h-448q-42 0 -59 40q-17 39 14 69l144 144l-355 355l-355 -355l144 -144q31 -30 14 -69q-17 -40 -59 -40h-448q-26 0 -45 19t-19 45v448q0 42 40 59q39 17 69 -14l144 -144 l355 355l-355 355l-144 -144q-19 -19 -45 -19q-12 0 -24 5q-40 17 -40 59v448q0 26 19 45t45 19h448q42 0 59 -40q17 -39 -14 -69l-144 -144l355 -355l355 355l-144 144q-31 30 -14 69q17 40 59 40h448q26 0 45 -19t19 -45v-448q0 -42 -39 -59q-13 -5 -25 -5q-26 0 -45 19z "/></svg></span>
  <span style="left:1477px;top:15px;width:23px;height:23px;border-radius:50%;background:#1f88db;overflow:hidden;line-height:0"><svg width="23" height="23" viewBox="0 0 41 41"><defs><linearGradient id="sh2" x1="1" y1="0" x2="0" y2="1"><stop offset="0.25" stop-color="#14568f" stop-opacity=".7"/><stop offset="0.8" stop-color="#14568f" stop-opacity="0"/></linearGradient></defs><rect width="41" height="41" fill="#1f88db"/><polygon points="16.4,13.2 28.7,29.6 3.7,54.6 -8.6,38.2" fill="url(#sh2)"/><circle cx="20.1" cy="16.9" r="5.2" fill="#fff"/><path d="M11.7 29.8 L14 24.2 Q14.8 22.3 16.4 22.7 Q20.1 24.4 23.8 22.7 Q25.4 22.3 26.2 24.2 L28.7 29.8 Z" fill="#fff"/></svg></span>
  <span style="left:1511px">博乐-www.fkym.net</span>
 </div>
</div>
<div id="panel">
 <span class="btn" style="left:15px;width:37px;background:#444c69"><svg style="display:inline-block;width:11.66px;height:13.6px;vertical-align:-1.94px;" viewBox="-0 0 1536 1792" fill="currentColor"><path transform="translate(0,1536) scale(1,-1)" d="M1511 480q0 -5 -1 -7q-64 -268 -268 -434.5t-478 -166.5q-146 0 -282.5 55t-243.5 157l-129 -129q-19 -19 -45 -19t-45 19t-19 45v448q0 26 19 45t45 19h448q26 0 45 -19t19 -45t-19 -45l-137 -137q71 -66 161 -102t187 -36q134 0 250 65t186 179q11 17 53 117 q8 23 30 23h192q13 0 22.5 -9.5t9.5 -22.5zM1536 1280v-448q0 -26 -19 -45t-45 -19h-448q-26 0 -45 19t-19 45t19 45l138 138q-148 137 -349 137q-134 0 -250 -65t-186 -179q-11 -17 -53 -117q-8 -23 -30 -23h-199q-13 0 -22.5 9.5t-9.5 22.5v7q65 268 270 434.5t480 166.5 q146 0 284 -55.5t245 -156.5l130 129q19 19 45 19t45 -19t19 -45z"/></svg></span>
 <span class="btn" style="left:56px;width:66px;background:#18bc9c"><svg style="display:inline-block;width:10.69px;height:13.6px;vertical-align:-1.94px;" viewBox="-0 0 1408 1792" fill="currentColor"><path transform="translate(0,1536) scale(1,-1)" d="M1408 800v-192q0 -40 -28 -68t-68 -28h-416v-416q0 -40 -28 -68t-68 -28h-192q-40 0 -68 28t-28 68v416h-416q-40 0 -68 28t-28 68v192q0 40 28 68t68 28h416v416q0 40 28 68t68 28h192q40 0 68 -28t28 -68v-416h416q40 0 68 -28t28 -68z"/></svg> 添加</span>
 <span class="btn" style="left:126px;width:67px;background:#18bc9c;opacity:.65"><svg style="display:inline-block;width:11.66px;height:13.6px;vertical-align:-1.94px;" viewBox="-0 0 1536 1792" fill="currentColor"><path transform="translate(0,1536) scale(1,-1)" d="M363 0l91 91l-235 235l-91 -91v-107h128v-128h107zM886 928q0 22 -22 22q-10 0 -17 -7l-542 -542q-7 -7 -7 -17q0 -22 22 -22q10 0 17 7l542 542q7 7 7 17zM832 1120l416 -416l-832 -832h-416v416zM1515 1024q0 -53 -37 -90l-166 -166l-416 416l166 165q36 38 90 38 q53 0 91 -38l235 -234q37 -39 37 -91z"/></svg> 编辑</span>
 <span class="btn" style="left:196px;width:66px;background:#f75444;opacity:.65"><svg style="display:inline-block;width:10.69px;height:13.6px;vertical-align:-1.94px;" viewBox="-0 0 1408 1792" fill="currentColor"><path transform="translate(0,1536) scale(1,-1)" d="M512 160v704q0 14 -9 23t-23 9h-64q-14 0 -23 -9t-9 -23v-704q0 -14 9 -23t23 -9h64q14 0 23 9t9 23zM768 160v704q0 14 -9 23t-23 9h-64q-14 0 -23 -9t-9 -23v-704q0 -14 9 -23t23 -9h64q14 0 23 9t9 23zM1024 160v704q0 14 -9 23t-23 9h-64q-14 0 -23 -9t-9 -23v-704 q0 -14 9 -23t23 -9h64q14 0 23 9t9 23zM480 1152h448l-48 117q-7 9 -17 11h-317q-10 -2 -17 -11zM1408 1120v-64q0 -14 -9 -23t-23 -9h-96v-948q0 -83 -47 -143.5t-113 -60.5h-832q-66 0 -113 58.5t-47 141.5v952h-96q-14 0 -23 9t-9 23v64q0 14 9 23t23 9h309l70 167 q15 37 54 63t79 26h320q40 0 79 -26t54 -63l70 -167h309q14 0 23 -9t9 -23z"/></svg> 删除</span>
 <span class="btn" style="left:266px;width:67px;background:#444c69;opacity:.65"><svg style="display:inline-block;width:11.66px;height:13.6px;vertical-align:-1.94px;" viewBox="-0 0 1536 1792" fill="currentColor"><path transform="translate(0,1536) scale(1,-1)" d="M1024 640q0 106 -75 181t-181 75t-181 -75t-75 -181t75 -181t181 -75t181 75t75 181zM1536 749v-222q0 -12 -8 -23t-20 -13l-185 -28q-19 -54 -39 -91q35 -50 107 -138q10 -12 10 -25t-9 -23q-27 -37 -99 -108t-94 -71q-12 0 -26 9l-138 108q-44 -23 -91 -38 q-16 -136 -29 -186q-7 -28 -36 -28h-222q-14 0 -24.5 8.5t-11.5 21.5l-28 184q-49 16 -90 37l-141 -107q-10 -9 -25 -9q-14 0 -25 11q-126 114 -165 168q-7 10 -7 23q0 12 8 23q15 21 51 66.5t54 70.5q-27 50 -41 99l-183 27q-13 2 -21 12.5t-8 23.5v222q0 12 8 23t19 13 l186 28q14 46 39 92q-40 57 -107 138q-10 12 -10 24q0 10 9 23q26 36 98.5 107.5t94.5 71.5q13 0 26 -10l138 -107q44 23 91 38q16 136 29 186q7 28 36 28h222q14 0 24.5 -8.5t11.5 -21.5l28 -184q49 -16 90 -37l142 107q9 9 24 9q13 0 25 -10q129 -119 165 -170q7 -8 7 -22 q0 -12 -8 -23q-15 -21 -51 -66.5t-54 -70.5q26 -50 41 -98l183 -28q13 -2 21 -12.5t8 -23.5z"/></svg> 更多</span>
 <div style="position:absolute;left:1264px;top:25px;width:194px;height:33px;border:1px solid #d2d6de;background:#fff;line-height:31px;padding-left:12px;color:#999;font-size:13px">搜索</div>
 <div class="gbtn" style="left:1463px;top:25px;width:138px;height:33px;border-radius:3px"></div>
 <div style="position:absolute;left:1501px;top:26px;width:1px;height:31px;background:#ddd"></div>
 <div style="position:absolute;left:1550px;top:26px;width:1px;height:31px;background:#ddd"></div>
 <svg style="position:absolute;left:1476.7px;top:33px" width="12.3" height="12.8" preserveAspectRatio="none" viewBox="0 0 13 13" fill="#444"><path d="M0 0H13V13H0ZM1 2V12H12V2Z" fill-rule="evenodd"/><rect x="2" y="3.2" width="1.3" height="1.3"/><rect x="4.3" y="3.2" width="6.7" height="1.3"/><rect x="2" y="5.5" width="1.3" height="1.3"/><rect x="4.3" y="5.5" width="6.7" height="1.3"/><rect x="2" y="7.8" width="1.3" height="1.3"/><rect x="4.3" y="7.8" width="6.7" height="1.3"/><rect x="2" y="10" width="1.3" height="1.3"/><rect x="4.3" y="10" width="6.7" height="1.3"/></svg>
 <svg style="position:absolute;left:1513.5px;top:34px" width="12.6" height="12" preserveAspectRatio="none" viewBox="0 0 13 12" fill="#444"><rect x="0" y="0" width="3.6" height="3.3" rx=".4"/><rect x="4.7" y="0" width="3.6" height="3.3" rx=".4"/><rect x="9.4" y="0" width="3.6" height="3.3" rx=".4"/><rect x="0" y="4.35" width="3.6" height="3.3" rx=".4"/><rect x="4.7" y="4.35" width="3.6" height="3.3" rx=".4"/><rect x="9.4" y="4.35" width="3.6" height="3.3" rx=".4"/><rect x="0" y="8.7" width="3.6" height="3.3" rx=".4"/><rect x="4.7" y="8.7" width="3.6" height="3.3" rx=".4"/><rect x="9.4" y="8.7" width="3.6" height="3.3" rx=".4"/></svg>
 <svg style="position:absolute;left:1530px;top:40px" width="8" height="4" viewBox="0 0 8 4" fill="#444"><path d="M0 0H8L4 4Z"/></svg>
 <svg style="position:absolute;left:1563px;top:33px" width="13" height="13" viewBox="0 0 13 13" fill="#444"><rect x="0" y="10" width="12" height="3"/><path d="M5.2 0H11.5V6.3L9.4 4.2L5.2 8.4L3.1 6.3L7.3 2.1Z"/></svg>
 <svg style="position:absolute;left:1580px;top:40px" width="8" height="4" viewBox="0 0 8 4" fill="#444"><path d="M0 0H8L4 4Z"/></svg>
 <div class="gbtn" style="left:1606px;top:25px;width:40px;height:33px;border-radius:3px"></div>
 <span style="position:absolute;left:1619px;top:29px;color:#444;line-height:20px"><svg style="display:inline-block;width:13.00px;height:14.0px;vertical-align:-2.00px;" viewBox="-0 0 1664 1792" fill="currentColor"><path transform="translate(0,1536) scale(1,-1)" d="M1152 704q0 185 -131.5 316.5t-316.5 131.5t-316.5 -131.5t-131.5 -316.5t131.5 -316.5t316.5 -131.5t316.5 131.5t131.5 316.5zM1664 -128q0 -52 -38 -90t-90 -38q-54 0 -90 38l-343 342q-179 -124 -399 -124q-143 0 -273.5 55.5t-225 150t-150 225t-55.5 273.5 t55.5 273.5t150 225t225 150t273.5 55.5t273.5 -55.5t225 -150t150 -225t55.5 -273.5q0 -220 -124 -399l343 -343q37 -37 37 -90z"/></svg></span>
 <table id="tbl">
  <colgroup><col style="width:44px"><col style="width:118px"><col style="width:127px"><col style="width:167px"><col style="width:216px"><col style="width:249px"><col style="width:250px"><col style="width:259px"><col style="width:201px"></colgroup>
  <thead><tr><th><span class="cb"></span></th><th>Id</th><th>标题</th><th>赔率</th><th>数量</th><th>起始赔率(%)</th><th>结束赔率(%)</th><th>类型</th><th>操作</th></tr></thead>
  <tbody>
<tr class="hov"><td><span class="cb"></span></td><td>1</td><td><a class="ed">0:0</a></td><td><a class="ed">6.15</a></td><td><a class="ed">5000000</a></td><td><a class="ed">1.20</a></td><td><a class="ed">10.00</a></td><td class="ty"><svg style="display:inline-block;width:12.00px;height:14px;vertical-align:-2.00px;" viewBox="-0 0 1536 1792" fill="#444c69"><path transform="translate(0,1536) scale(1,-1)" d="M1536 640q0 -209 -103 -385.5t-279.5 -279.5t-385.5 -103t-385.5 103t-279.5 279.5t-103 385.5t103 385.5t279.5 279.5t385.5 103t385.5 -103t279.5 -279.5t103 -385.5z"/></svg> 全场波胆</td><td><span class="bx bx-e"><svg style="display:inline-block;width:10.29px;height:12px;vertical-align:-1.72px;" viewBox="-0 0 1536 1792" fill="#fff"><path transform="translate(0,1536) scale(1,-1)" d="M363 0l91 91l-235 235l-91 -91v-107h128v-128h107zM886 928q0 22 -22 22q-10 0 -17 -7l-542 -542q-7 -7 -7 -17q0 -22 22 -22q10 0 17 7l542 542q7 7 7 17zM832 1120l416 -416l-832 -832h-416v416zM1515 1024q0 -53 -37 -90l-166 -166l-416 416l166 165q36 38 90 38 q53 0 91 -38l235 -234q37 -39 37 -91z"/></svg></span><span class="bx bx-d"><svg style="display:inline-block;width:9.43px;height:12px;vertical-align:-1.72px;" viewBox="-0 0 1408 1792" fill="#fff"><path transform="translate(0,1536) scale(1,-1)" d="M512 160v704q0 14 -9 23t-23 9h-64q-14 0 -23 -9t-9 -23v-704q0 -14 9 -23t23 -9h64q14 0 23 9t9 23zM768 160v704q0 14 -9 23t-23 9h-64q-14 0 -23 -9t-9 -23v-704q0 -14 9 -23t23 -9h64q14 0 23 9t9 23zM1024 160v704q0 14 -9 23t-23 9h-64q-14 0 -23 -9t-9 -23v-704 q0 -14 9 -23t23 -9h64q14 0 23 9t9 23zM480 1152h448l-48 117q-7 9 -17 11h-317q-10 -2 -17 -11zM1408 1120v-64q0 -14 -9 -23t-23 -9h-96v-948q0 -83 -47 -143.5t-113 -60.5h-832q-66 0 -113 58.5t-47 141.5v952h-96q-14 0 -23 9t-9 23v64q0 14 9 23t23 9h309l70 167 q15 37 54 63t79 26h320q40 0 79 -26t54 -63l70 -167h309q14 0 23 -9t9 -23z"/></svg></span></td></tr>
<tr><td><span class="cb"></span></td><td>2</td><td><a class="ed">0:1</a></td><td><a class="ed">6.77</a></td><td><a class="ed">5000000</a></td><td><a class="ed">1.00</a></td><td><a class="ed">10.00</a></td><td class="ty"><svg style="display:inline-block;width:12.00px;height:14px;vertical-align:-2.00px;" viewBox="-0 0 1536 1792" fill="#444c69"><path transform="translate(0,1536) scale(1,-1)" d="M1536 640q0 -209 -103 -385.5t-279.5 -279.5t-385.5 -103t-385.5 103t-279.5 279.5t-103 385.5t103 385.5t279.5 279.5t385.5 103t385.5 -103t279.5 -279.5t103 -385.5z"/></svg> 全场波胆</td><td><span class="bx bx-e"><svg style="display:inline-block;width:10.29px;height:12px;vertical-align:-1.72px;" viewBox="-0 0 1536 1792" fill="#fff"><path transform="translate(0,1536) scale(1,-1)" d="M363 0l91 91l-235 235l-91 -91v-107h128v-128h107zM886 928q0 22 -22 22q-10 0 -17 -7l-542 -542q-7 -7 -7 -17q0 -22 22 -22q10 0 17 7l542 542q7 7 7 17zM832 1120l416 -416l-832 -832h-416v416zM1515 1024q0 -53 -37 -90l-166 -166l-416 416l166 165q36 38 90 38 q53 0 91 -38l235 -234q37 -39 37 -91z"/></svg></span><span class="bx bx-d"><svg style="display:inline-block;width:9.43px;height:12px;vertical-align:-1.72px;" viewBox="-0 0 1408 1792" fill="#fff"><path transform="translate(0,1536) scale(1,-1)" d="M512 160v704q0 14 -9 23t-23 9h-64q-14 0 -23 -9t-9 -23v-704q0 -14 9 -23t23 -9h64q14 0 23 9t9 23zM768 160v704q0 14 -9 23t-23 9h-64q-14 0 -23 -9t-9 -23v-704q0 -14 9 -23t23 -9h64q14 0 23 9t9 23zM1024 160v704q0 14 -9 23t-23 9h-64q-14 0 -23 -9t-9 -23v-704 q0 -14 9 -23t23 -9h64q14 0 23 9t9 23zM480 1152h448l-48 117q-7 9 -17 11h-317q-10 -2 -17 -11zM1408 1120v-64q0 -14 -9 -23t-23 -9h-96v-948q0 -83 -47 -143.5t-113 -60.5h-832q-66 0 -113 58.5t-47 141.5v952h-96q-14 0 -23 9t-9 23v64q0 14 9 23t23 9h309l70 167 q15 37 54 63t79 26h320q40 0 79 -26t54 -63l70 -167h309q14 0 23 -9t9 -23z"/></svg></span></td></tr>
<tr><td><span class="cb"></span></td><td>3</td><td><a class="ed">0:2</a></td><td><a class="ed">4.17</a></td><td><a class="ed">5000000</a></td><td><a class="ed">1.00</a></td><td><a class="ed">10.00</a></td><td class="ty"><svg style="display:inline-block;width:12.00px;height:14px;vertical-align:-2.00px;" viewBox="-0 0 1536 1792" fill="#444c69"><path transform="translate(0,1536) scale(1,-1)" d="M1536 640q0 -209 -103 -385.5t-279.5 -279.5t-385.5 -103t-385.5 103t-279.5 279.5t-103 385.5t103 385.5t279.5 279.5t385.5 103t385.5 -103t279.5 -279.5t103 -385.5z"/></svg> 全场波胆</td><td><span class="bx bx-e"><svg style="display:inline-block;width:10.29px;height:12px;vertical-align:-1.72px;" viewBox="-0 0 1536 1792" fill="#fff"><path transform="translate(0,1536) scale(1,-1)" d="M363 0l91 91l-235 235l-91 -91v-107h128v-128h107zM886 928q0 22 -22 22q-10 0 -17 -7l-542 -542q-7 -7 -7 -17q0 -22 22 -22q10 0 17 7l542 542q7 7 7 17zM832 1120l416 -416l-832 -832h-416v416zM1515 1024q0 -53 -37 -90l-166 -166l-416 416l166 165q36 38 90 38 q53 0 91 -38l235 -234q37 -39 37 -91z"/></svg></span><span class="bx bx-d"><svg style="display:inline-block;width:9.43px;height:12px;vertical-align:-1.72px;" viewBox="-0 0 1408 1792" fill="#fff"><path transform="translate(0,1536) scale(1,-1)" d="M512 160v704q0 14 -9 23t-23 9h-64q-14 0 -23 -9t-9 -23v-704q0 -14 9 -23t23 -9h64q14 0 23 9t9 23zM768 160v704q0 14 -9 23t-23 9h-64q-14 0 -23 -9t-9 -23v-704q0 -14 9 -23t23 -9h64q14 0 23 9t9 23zM1024 160v704q0 14 -9 23t-23 9h-64q-14 0 -23 -9t-9 -23v-704 q0 -14 9 -23t23 -9h64q14 0 23 9t9 23zM480 1152h448l-48 117q-7 9 -17 11h-317q-10 -2 -17 -11zM1408 1120v-64q0 -14 -9 -23t-23 -9h-96v-948q0 -83 -47 -143.5t-113 -60.5h-832q-66 0 -113 58.5t-47 141.5v952h-96q-14 0 -23 9t-9 23v64q0 14 9 23t23 9h309l70 167 q15 37 54 63t79 26h320q40 0 79 -26t54 -63l70 -167h309q14 0 23 -9t9 -23z"/></svg></span></td></tr>
<tr><td><span class="cb"></span></td><td>4</td><td><a class="ed">0:3</a></td><td><a class="ed">0.59</a></td><td><a class="ed">5000000</a></td><td><a class="ed">1.00</a></td><td><a class="ed">10.00</a></td><td class="ty"><svg style="display:inline-block;width:12.00px;height:14px;vertical-align:-2.00px;" viewBox="-0 0 1536 1792" fill="#444c69"><path transform="translate(0,1536) scale(1,-1)" d="M1536 640q0 -209 -103 -385.5t-279.5 -279.5t-385.5 -103t-385.5 103t-279.5 279.5t-103 385.5t103 385.5t279.5 279.5t385.5 103t385.5 -103t279.5 -279.5t103 -385.5z"/></svg> 全场波胆</td><td><span class="bx bx-e"><svg style="display:inline-block;width:10.29px;height:12px;vertical-align:-1.72px;" viewBox="-0 0 1536 1792" fill="#fff"><path transform="translate(0,1536) scale(1,-1)" d="M363 0l91 91l-235 235l-91 -91v-107h128v-128h107zM886 928q0 22 -22 22q-10 0 -17 -7l-542 -542q-7 -7 -7 -17q0 -22 22 -22q10 0 17 7l542 542q7 7 7 17zM832 1120l416 -416l-832 -832h-416v416zM1515 1024q0 -53 -37 -90l-166 -166l-416 416l166 165q36 38 90 38 q53 0 91 -38l235 -234q37 -39 37 -91z"/></svg></span><span class="bx bx-d"><svg style="display:inline-block;width:9.43px;height:12px;vertical-align:-1.72px;" viewBox="-0 0 1408 1792" fill="#fff"><path transform="translate(0,1536) scale(1,-1)" d="M512 160v704q0 14 -9 23t-23 9h-64q-14 0 -23 -9t-9 -23v-704q0 -14 9 -23t23 -9h64q14 0 23 9t9 23zM768 160v704q0 14 -9 23t-23 9h-64q-14 0 -23 -9t-9 -23v-704q0 -14 9 -23t23 -9h64q14 0 23 9t9 23zM1024 160v704q0 14 -9 23t-23 9h-64q-14 0 -23 -9t-9 -23v-704 q0 -14 9 -23t23 -9h64q14 0 23 9t9 23zM480 1152h448l-48 117q-7 9 -17 11h-317q-10 -2 -17 -11zM1408 1120v-64q0 -14 -9 -23t-23 -9h-96v-948q0 -83 -47 -143.5t-113 -60.5h-832q-66 0 -113 58.5t-47 141.5v952h-96q-14 0 -23 9t-9 23v64q0 14 9 23t23 9h309l70 167 q15 37 54 63t79 26h320q40 0 79 -26t54 -63l70 -167h309q14 0 23 -9t9 -23z"/></svg></span></td></tr>
<tr><td><span class="cb"></span></td><td>5</td><td><a class="ed">1:0</a></td><td><a class="ed">8.58</a></td><td><a class="ed">5000000</a></td><td><a class="ed">1.00</a></td><td><a class="ed">10.00</a></td><td class="ty"><svg style="display:inline-block;width:12.00px;height:14px;vertical-align:-2.00px;" viewBox="-0 0 1536 1792" fill="#444c69"><path transform="translate(0,1536) scale(1,-1)" d="M1536 640q0 -209 -103 -385.5t-279.5 -279.5t-385.5 -103t-385.5 103t-279.5 279.5t-103 385.5t103 385.5t279.5 279.5t385.5 103t385.5 -103t279.5 -279.5t103 -385.5z"/></svg> 全场波胆</td><td><span class="bx bx-e"><svg style="display:inline-block;width:10.29px;height:12px;vertical-align:-1.72px;" viewBox="-0 0 1536 1792" fill="#fff"><path transform="translate(0,1536) scale(1,-1)" d="M363 0l91 91l-235 235l-91 -91v-107h128v-128h107zM886 928q0 22 -22 22q-10 0 -17 -7l-542 -542q-7 -7 -7 -17q0 -22 22 -22q10 0 17 7l542 542q7 7 7 17zM832 1120l416 -416l-832 -832h-416v416zM1515 1024q0 -53 -37 -90l-166 -166l-416 416l166 165q36 38 90 38 q53 0 91 -38l235 -234q37 -39 37 -91z"/></svg></span><span class="bx bx-d"><svg style="display:inline-block;width:9.43px;height:12px;vertical-align:-1.72px;" viewBox="-0 0 1408 1792" fill="#fff"><path transform="translate(0,1536) scale(1,-1)" d="M512 160v704q0 14 -9 23t-23 9h-64q-14 0 -23 -9t-9 -23v-704q0 -14 9 -23t23 -9h64q14 0 23 9t9 23zM768 160v704q0 14 -9 23t-23 9h-64q-14 0 -23 -9t-9 -23v-704q0 -14 9 -23t23 -9h64q14 0 23 9t9 23zM1024 160v704q0 14 -9 23t-23 9h-64q-14 0 -23 -9t-9 -23v-704 q0 -14 9 -23t23 -9h64q14 0 23 9t9 23zM480 1152h448l-48 117q-7 9 -17 11h-317q-10 -2 -17 -11zM1408 1120v-64q0 -14 -9 -23t-23 -9h-96v-948q0 -83 -47 -143.5t-113 -60.5h-832q-66 0 -113 58.5t-47 141.5v952h-96q-14 0 -23 9t-9 23v64q0 14 9 23t23 9h309l70 167 q15 37 54 63t79 26h320q40 0 79 -26t54 -63l70 -167h309q14 0 23 -9t9 -23z"/></svg></span></td></tr>
<tr><td><span class="cb"></span></td><td>6</td><td><a class="ed">1:1</a></td><td><a class="ed">12.68</a></td><td><a class="ed">5000000</a></td><td><a class="ed">1.00</a></td><td><a class="ed">10.00</a></td><td class="ty"><svg style="display:inline-block;width:12.00px;height:14px;vertical-align:-2.00px;" viewBox="-0 0 1536 1792" fill="#444c69"><path transform="translate(0,1536) scale(1,-1)" d="M1536 640q0 -209 -103 -385.5t-279.5 -279.5t-385.5 -103t-385.5 103t-279.5 279.5t-103 385.5t103 385.5t279.5 279.5t385.5 103t385.5 -103t279.5 -279.5t103 -385.5z"/></svg> 全场波胆</td><td><span class="bx bx-e"><svg style="display:inline-block;width:10.29px;height:12px;vertical-align:-1.72px;" viewBox="-0 0 1536 1792" fill="#fff"><path transform="translate(0,1536) scale(1,-1)" d="M363 0l91 91l-235 235l-91 -91v-107h128v-128h107zM886 928q0 22 -22 22q-10 0 -17 -7l-542 -542q-7 -7 -7 -17q0 -22 22 -22q10 0 17 7l542 542q7 7 7 17zM832 1120l416 -416l-832 -832h-416v416zM1515 1024q0 -53 -37 -90l-166 -166l-416 416l166 165q36 38 90 38 q53 0 91 -38l235 -234q37 -39 37 -91z"/></svg></span><span class="bx bx-d"><svg style="display:inline-block;width:9.43px;height:12px;vertical-align:-1.72px;" viewBox="-0 0 1408 1792" fill="#fff"><path transform="translate(0,1536) scale(1,-1)" d="M512 160v704q0 14 -9 23t-23 9h-64q-14 0 -23 -9t-9 -23v-704q0 -14 9 -23t23 -9h64q14 0 23 9t9 23zM768 160v704q0 14 -9 23t-23 9h-64q-14 0 -23 -9t-9 -23v-704q0 -14 9 -23t23 -9h64q14 0 23 9t9 23zM1024 160v704q0 14 -9 23t-23 9h-64q-14 0 -23 -9t-9 -23v-704 q0 -14 9 -23t23 -9h64q14 0 23 9t9 23zM480 1152h448l-48 117q-7 9 -17 11h-317q-10 -2 -17 -11zM1408 1120v-64q0 -14 -9 -23t-23 -9h-96v-948q0 -83 -47 -143.5t-113 -60.5h-832q-66 0 -113 58.5t-47 141.5v952h-96q-14 0 -23 9t-9 23v64q0 14 9 23t23 9h309l70 167 q15 37 54 63t79 26h320q40 0 79 -26t54 -63l70 -167h309q14 0 23 -9t9 -23z"/></svg></span></td></tr>
<tr><td><span class="cb"></span></td><td>7</td><td><a class="ed">1:2</a></td><td><a class="ed">6.47</a></td><td><a class="ed">5000000</a></td><td><a class="ed">1.00</a></td><td><a class="ed">10.00</a></td><td class="ty"><svg style="display:inline-block;width:12.00px;height:14px;vertical-align:-2.00px;" viewBox="-0 0 1536 1792" fill="#444c69"><path transform="translate(0,1536) scale(1,-1)" d="M1536 640q0 -209 -103 -385.5t-279.5 -279.5t-385.5 -103t-385.5 103t-279.5 279.5t-103 385.5t103 385.5t279.5 279.5t385.5 103t385.5 -103t279.5 -279.5t103 -385.5z"/></svg> 全场波胆</td><td><span class="bx bx-e"><svg style="display:inline-block;width:10.29px;height:12px;vertical-align:-1.72px;" viewBox="-0 0 1536 1792" fill="#fff"><path transform="translate(0,1536) scale(1,-1)" d="M363 0l91 91l-235 235l-91 -91v-107h128v-128h107zM886 928q0 22 -22 22q-10 0 -17 -7l-542 -542q-7 -7 -7 -17q0 -22 22 -22q10 0 17 7l542 542q7 7 7 17zM832 1120l416 -416l-832 -832h-416v416zM1515 1024q0 -53 -37 -90l-166 -166l-416 416l166 165q36 38 90 38 q53 0 91 -38l235 -234q37 -39 37 -91z"/></svg></span><span class="bx bx-d"><svg style="display:inline-block;width:9.43px;height:12px;vertical-align:-1.72px;" viewBox="-0 0 1408 1792" fill="#fff"><path transform="translate(0,1536) scale(1,-1)" d="M512 160v704q0 14 -9 23t-23 9h-64q-14 0 -23 -9t-9 -23v-704q0 -14 9 -23t23 -9h64q14 0 23 9t9 23zM768 160v704q0 14 -9 23t-23 9h-64q-14 0 -23 -9t-9 -23v-704q0 -14 9 -23t23 -9h64q14 0 23 9t9 23zM1024 160v704q0 14 -9 23t-23 9h-64q-14 0 -23 -9t-9 -23v-704 q0 -14 9 -23t23 -9h64q14 0 23 9t9 23zM480 1152h448l-48 117q-7 9 -17 11h-317q-10 -2 -17 -11zM1408 1120v-64q0 -14 -9 -23t-23 -9h-96v-948q0 -83 -47 -143.5t-113 -60.5h-832q-66 0 -113 58.5t-47 141.5v952h-96q-14 0 -23 9t-9 23v64q0 14 9 23t23 9h309l70 167 q15 37 54 63t79 26h320q40 0 79 -26t54 -63l70 -167h309q14 0 23 -9t9 -23z"/></svg></span></td></tr>
<tr><td><span class="cb"></span></td><td>8</td><td><a class="ed">1:3</a></td><td><a class="ed">2.47</a></td><td><a class="ed">5000000</a></td><td><a class="ed">1.00</a></td><td><a class="ed">10.00</a></td><td class="ty"><svg style="display:inline-block;width:12.00px;height:14px;vertical-align:-2.00px;" viewBox="-0 0 1536 1792" fill="#444c69"><path transform="translate(0,1536) scale(1,-1)" d="M1536 640q0 -209 -103 -385.5t-279.5 -279.5t-385.5 -103t-385.5 103t-279.5 279.5t-103 385.5t103 385.5t279.5 279.5t385.5 103t385.5 -103t279.5 -279.5t103 -385.5z"/></svg> 全场波胆</td><td><span class="bx bx-e"><svg style="display:inline-block;width:10.29px;height:12px;vertical-align:-1.72px;" viewBox="-0 0 1536 1792" fill="#fff"><path transform="translate(0,1536) scale(1,-1)" d="M363 0l91 91l-235 235l-91 -91v-107h128v-128h107zM886 928q0 22 -22 22q-10 0 -17 -7l-542 -542q-7 -7 -7 -17q0 -22 22 -22q10 0 17 7l542 542q7 7 7 17zM832 1120l416 -416l-832 -832h-416v416zM1515 1024q0 -53 -37 -90l-166 -166l-416 416l166 165q36 38 90 38 q53 0 91 -38l235 -234q37 -39 37 -91z"/></svg></span><span class="bx bx-d"><svg style="display:inline-block;width:9.43px;height:12px;vertical-align:-1.72px;" viewBox="-0 0 1408 1792" fill="#fff"><path transform="translate(0,1536) scale(1,-1)" d="M512 160v704q0 14 -9 23t-23 9h-64q-14 0 -23 -9t-9 -23v-704q0 -14 9 -23t23 -9h64q14 0 23 9t9 23zM768 160v704q0 14 -9 23t-23 9h-64q-14 0 -23 -9t-9 -23v-704q0 -14 9 -23t23 -9h64q14 0 23 9t9 23zM1024 160v704q0 14 -9 23t-23 9h-64q-14 0 -23 -9t-9 -23v-704 q0 -14 9 -23t23 -9h64q14 0 23 9t9 23zM480 1152h448l-48 117q-7 9 -17 11h-317q-10 -2 -17 -11zM1408 1120v-64q0 -14 -9 -23t-23 -9h-96v-948q0 -83 -47 -143.5t-113 -60.5h-832q-66 0 -113 58.5t-47 141.5v952h-96q-14 0 -23 9t-9 23v64q0 14 9 23t23 9h309l70 167 q15 37 54 63t79 26h320q40 0 79 -26t54 -63l70 -167h309q14 0 23 -9t9 -23z"/></svg></span></td></tr>
<tr><td><span class="cb"></span></td><td>9</td><td><a class="ed">2:0</a></td><td><a class="ed">6.75</a></td><td><a class="ed">5000000</a></td><td><a class="ed">1.00</a></td><td><a class="ed">10.00</a></td><td class="ty"><svg style="display:inline-block;width:12.00px;height:14px;vertical-align:-2.00px;" viewBox="-0 0 1536 1792" fill="#444c69"><path transform="translate(0,1536) scale(1,-1)" d="M1536 640q0 -209 -103 -385.5t-279.5 -279.5t-385.5 -103t-385.5 103t-279.5 279.5t-103 385.5t103 385.5t279.5 279.5t385.5 103t385.5 -103t279.5 -279.5t103 -385.5z"/></svg> 全场波胆</td><td><span class="bx bx-e"><svg style="display:inline-block;width:10.29px;height:12px;vertical-align:-1.72px;" viewBox="-0 0 1536 1792" fill="#fff"><path transform="translate(0,1536) scale(1,-1)" d="M363 0l91 91l-235 235l-91 -91v-107h128v-128h107zM886 928q0 22 -22 22q-10 0 -17 -7l-542 -542q-7 -7 -7 -17q0 -22 22 -22q10 0 17 7l542 542q7 7 7 17zM832 1120l416 -416l-832 -832h-416v416zM1515 1024q0 -53 -37 -90l-166 -166l-416 416l166 165q36 38 90 38 q53 0 91 -38l235 -234q37 -39 37 -91z"/></svg></span><span class="bx bx-d"><svg style="display:inline-block;width:9.43px;height:12px;vertical-align:-1.72px;" viewBox="-0 0 1408 1792" fill="#fff"><path transform="translate(0,1536) scale(1,-1)" d="M512 160v704q0 14 -9 23t-23 9h-64q-14 0 -23 -9t-9 -23v-704q0 -14 9 -23t23 -9h64q14 0 23 9t9 23zM768 160v704q0 14 -9 23t-23 9h-64q-14 0 -23 -9t-9 -23v-704q0 -14 9 -23t23 -9h64q14 0 23 9t9 23zM1024 160v704q0 14 -9 23t-23 9h-64q-14 0 -23 -9t-9 -23v-704 q0 -14 9 -23t23 -9h64q14 0 23 9t9 23zM480 1152h448l-48 117q-7 9 -17 11h-317q-10 -2 -17 -11zM1408 1120v-64q0 -14 -9 -23t-23 -9h-96v-948q0 -83 -47 -143.5t-113 -60.5h-832q-66 0 -113 58.5t-47 141.5v952h-96q-14 0 -23 9t-9 23v64q0 14 9 23t23 9h309l70 167 q15 37 54 63t79 26h320q40 0 79 -26t54 -63l70 -167h309q14 0 23 -9t9 -23z"/></svg></span></td></tr>
<tr><td><span class="cb"></span></td><td>10</td><td><a class="ed">2:1</a></td><td><a class="ed">8.46</a></td><td><a class="ed">5000000</a></td><td><a class="ed">1.00</a></td><td><a class="ed">10.00</a></td><td class="ty"><svg style="display:inline-block;width:12.00px;height:14px;vertical-align:-2.00px;" viewBox="-0 0 1536 1792" fill="#444c69"><path transform="translate(0,1536) scale(1,-1)" d="M1536 640q0 -209 -103 -385.5t-279.5 -279.5t-385.5 -103t-385.5 103t-279.5 279.5t-103 385.5t103 385.5t279.5 279.5t385.5 103t385.5 -103t279.5 -279.5t103 -385.5z"/></svg> 全场波胆</td><td><span class="bx bx-e"><svg style="display:inline-block;width:10.29px;height:12px;vertical-align:-1.72px;" viewBox="-0 0 1536 1792" fill="#fff"><path transform="translate(0,1536) scale(1,-1)" d="M363 0l91 91l-235 235l-91 -91v-107h128v-128h107zM886 928q0 22 -22 22q-10 0 -17 -7l-542 -542q-7 -7 -7 -17q0 -22 22 -22q10 0 17 7l542 542q7 7 7 17zM832 1120l416 -416l-832 -832h-416v416zM1515 1024q0 -53 -37 -90l-166 -166l-416 416l166 165q36 38 90 38 q53 0 91 -38l235 -234q37 -39 37 -91z"/></svg></span><span class="bx bx-d"><svg style="display:inline-block;width:9.43px;height:12px;vertical-align:-1.72px;" viewBox="-0 0 1408 1792" fill="#fff"><path transform="translate(0,1536) scale(1,-1)" d="M512 160v704q0 14 -9 23t-23 9h-64q-14 0 -23 -9t-9 -23v-704q0 -14 9 -23t23 -9h64q14 0 23 9t9 23zM768 160v704q0 14 -9 23t-23 9h-64q-14 0 -23 -9t-9 -23v-704q0 -14 9 -23t23 -9h64q14 0 23 9t9 23zM1024 160v704q0 14 -9 23t-23 9h-64q-14 0 -23 -9t-9 -23v-704 q0 -14 9 -23t23 -9h64q14 0 23 9t9 23zM480 1152h448l-48 117q-7 9 -17 11h-317q-10 -2 -17 -11zM1408 1120v-64q0 -14 -9 -23t-23 -9h-96v-948q0 -83 -47 -143.5t-113 -60.5h-832q-66 0 -113 58.5t-47 141.5v952h-96q-14 0 -23 9t-9 23v64q0 14 9 23t23 9h309l70 167 q15 37 54 63t79 26h320q40 0 79 -26t54 -63l70 -167h309q14 0 23 -9t9 -23z"/></svg></span></td></tr>

  </tbody>
 </table>
 <div id="pinfo">显示第 1 到第 10 条记录，总共 26 条记录 每页显示</div>
 <div style="position:absolute;left:338px;top:592px;width:52px;height:33px;border:1px solid #ddd;background:#f4f4f4;border-radius:3px;font-size:12px;color:#444;line-height:29px;padding-left:13.5px">10<svg style="position:absolute;left:29.7px;top:14px" width="8" height="4" viewBox="0 0 8 4" fill="#444"><path d="M0 4H8L4 0Z"/></svg></div>
 <div id="pinfo2">条记录</div>
 <span class="pg" style="left:1300px;width:68px;border-radius:3px 0 0 3px">上一页</span>
 <span class="pg" style="left:1399px;width:34px">2</span>
 <span class="pg" style="left:1432px;width:34px">3</span>
 <span class="pg" style="left:1367px;width:33px;background:#444c69;border-color:#444c69;color:#fff;font-weight:bold">1</span>
 <span class="pg" style="left:1465px;width:68px;border-radius:0 3px 3px 0">下一页</span>
 <span class="pg" style="left:1538px;width:50px;height:33px;background:#fff;border-color:#d2d6de"></span>
 <span class="pg" style="left:1593px;top:591px;width:60px;height:33px;line-height:29px;background:#f4f4f4;border-radius:4px;font-size:13px;text-align:left;padding-left:12px;color:#444">跳转</span>
</div>

</body></html>
